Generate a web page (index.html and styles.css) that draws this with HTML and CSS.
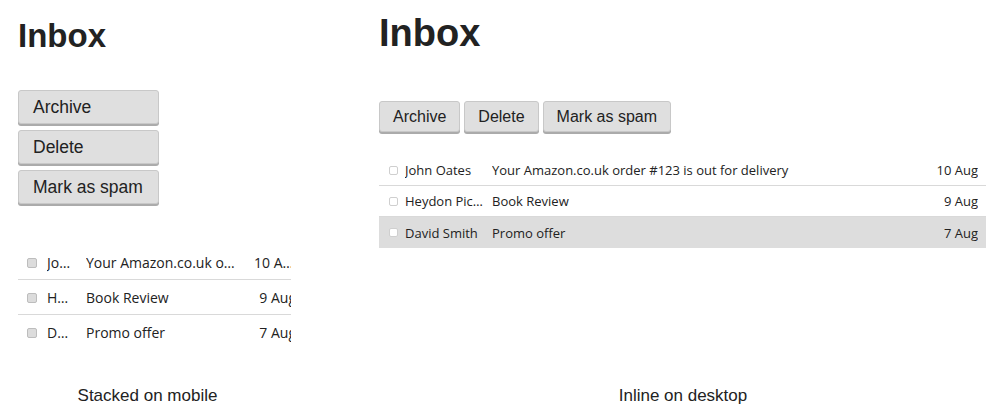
FILE: index.html
```html
<!DOCTYPE html>
<html lang="en">
<head>
<meta charset="utf-8">
<title>Inbox</title>
<link rel="stylesheet" href="styles.css">
</head>
<body>
<div class="page">
  <section class="demo mobile">
    <h1 class="title">Inbox</h1>
    <div class="actions">
      <button class="btn">Archive</button>
      <button class="btn">Delete</button>
      <button class="btn">Mark as spam</button>
    </div>
    <div class="list">
      <div class="row">
        <span class="check"></span>
        <span class="name">John Oates</span>
        <span class="subject">Your Amazon.co.uk order #123 is out for delivery</span>
        <span class="date">10 Aug</span>
      </div>
      <div class="row">
        <span class="check"></span>
        <span class="name">Heydon Pickering</span>
        <span class="subject">Book Review</span>
        <span class="date">9 Aug</span>
      </div>
      <div class="row">
        <span class="check"></span>
        <span class="name">David Smith</span>
        <span class="subject">Promo offer</span>
        <span class="date">7 Aug</span>
      </div>
    </div>
  </section>
  <section class="demo desktop">
    <h1 class="title">Inbox</h1>
    <div class="actions">
      <button class="btn">Archive</button>
      <button class="btn">Delete</button>
      <button class="btn">Mark as spam</button>
    </div>
    <div class="list">
      <div class="row">
        <span class="check"></span>
        <span class="name">John Oates</span>
        <span class="subject">Your Amazon.co.uk order #123 is out for delivery</span>
        <span class="date">10 Aug</span>
      </div>
      <div class="row">
        <span class="check"></span>
        <span class="name">Heydon Pickering</span>
        <span class="subject">Book Review</span>
        <span class="date">9 Aug</span>
      </div>
      <div class="row selected">
        <span class="check"></span>
        <span class="name">David Smith</span>
        <span class="subject">Promo offer</span>
        <span class="date">7 Aug</span>
      </div>
    </div>
  </section>
</div>
<div class="captions">
  <p class="caption mobile-cap">Stacked on mobile</p>
  <p class="caption desktop-cap">Inline on desktop</p>
</div>
</body>
</html>
```

FILE: styles.css
```css
html, body {
  margin: 0;
  padding: 0;
  background: #fff;
  color: #222;
}

.page {
  display: flex;
  align-items: flex-start;
}

.demo {
  box-sizing: border-box;
}

.title {
  margin: 0;
  font-family: "Liberation Sans", Arial, sans-serif;
  font-weight: bold;
  color: #222;
}

.btn {
  box-sizing: border-box;
  margin: 0;
  font-family: "Liberation Sans", Arial, sans-serif;
  color: #222;
  background: #dfdfdf;
  border: 1px solid #c8c8c8;
  border-radius: 3px;
  box-shadow: 0 2px 0 #ababab;
  cursor: pointer;
}

.list {
  overflow: hidden;
  font-family: "Open Sans", "Noto Sans", sans-serif;
  color: #222;
}

.row {
  display: flex;
  align-items: center;
  box-sizing: border-box;
  border-bottom: 1px solid #d9d9d9;
}

.row:last-child {
  border-bottom: none;
}

.check {
  flex: none;
  box-sizing: border-box;
}

.name, .subject, .date {
  flex: none;
  white-space: nowrap;
  overflow: hidden;
  text-overflow: ellipsis;
}

/* ---------- mobile (stacked) ---------- */
.mobile {
  width: 295px;
  padding: 16px 4px 0 18px;
}

.mobile .title {
  font-size: 33px;
  line-height: 40px;
}

.mobile .actions {
  margin-top: 34px;
  display: flex;
  flex-direction: column;
  gap: 6px;
}

.mobile .btn {
  width: 141px;
  height: 34px;
  padding: 0 0 0 14px;
  text-align: left;
  font-size: 17.5px;
}

.mobile .list {
  margin-top: 41px;
  width: 273px;
  font-size: 14px;
}

.mobile .row {
  width: 273px;
  height: 35px;
  padding-left: 9px;
}

.mobile .check {
  width: 10px;
  height: 10px;
  margin-top: 1px;
  margin-right: 10px;
  background: #dcdcdc;
  border: 1px solid #bdbdbd;
  border-radius: 2px;
}

.mobile .name {
  width: 28px;
  margin-right: 11px;
}

.mobile .subject {
  width: 152px;
  margin-right: 16px;
}

.mobile .date {
  width: 42px;
  text-align: right;
}

/* ---------- desktop (inline) ---------- */
.desktop {
  width: 640px;
  margin-left: 68px;
  padding: 11px 17px 0 16px;
}

.desktop .title {
  font-size: 38px;
  line-height: 44px;
}

.desktop .actions {
  margin-top: 46px;
  display: flex;
  gap: 4px;
}

.desktop .btn {
  height: 31px;
  padding: 0 13px;
  font-size: 16px;
}

.desktop .list {
  margin-top: 23px;
  font-size: 13px;
}

.desktop .row {
  height: 31px;
  padding: 0 8px 0 10px;
}

.desktop .row.selected {
  background: #dddddd;
}

.desktop .check {
  width: 9px;
  height: 9px;
  margin-right: 7px;
  background: #fff;
  border: 1px solid #cfcfcf;
  border-radius: 2px;
}

.desktop .name {
  width: 80px;
  margin-right: 7px;
}

.desktop .subject {
  flex: 1 1 auto;
}

.desktop .date {
  text-align: right;
  margin-left: 10px;
}

/* ---------- captions ---------- */
.captions {
  display: flex;
  margin-top: 36px;
}

.caption {
  margin: 0;
  font-family: "Liberation Sans", Arial, sans-serif;
  font-size: 17px;
  line-height: 20px;
  color: #222;
  text-align: center;
}

.mobile-cap {
  width: 295px;
}

.desktop-cap {
  width: 640px;
  margin-left: 68px;
}
```
